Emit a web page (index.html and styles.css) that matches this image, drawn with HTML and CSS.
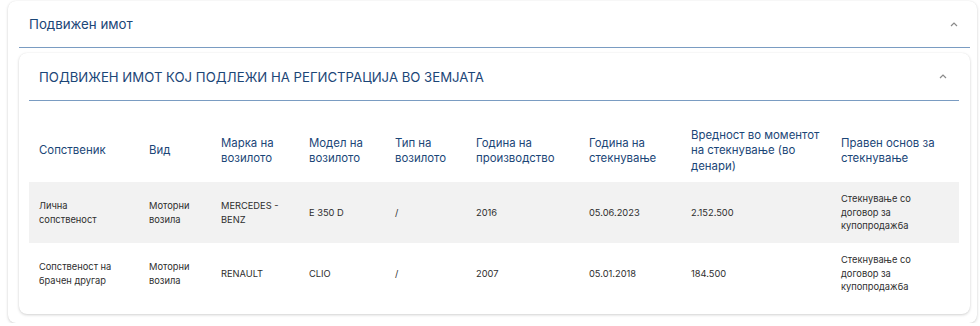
FILE: index.html
```html
<!DOCTYPE html>
<html lang="mk">
<head>
<meta charset="utf-8">
<link rel="stylesheet" href="styles.css">
</head>
<body>
<section class="card outer">
  <header class="panel-head outer-head">
    <h2 class="panel-title">Подвижен имот</h2>
    <span class="chev"><svg width="8" height="5" viewBox="0 0 8 5"><path d="M1 4 L4 1 L7 4" fill="none" stroke="#8a8a8a" stroke-width="1.2"/></svg></span>
  </header>
  <section class="card inner">
    <header class="panel-head inner-head">
      <h3 class="panel-title upper">ПОДВИЖЕН ИМОТ КОЈ ПОДЛЕЖИ НА РЕГИСТРАЦИЈА ВО ЗЕМЈАТА</h3>
      <span class="chev"><svg width="8" height="5" viewBox="0 0 8 5"><path d="M1 4 L4 1 L7 4" fill="none" stroke="#8a8a8a" stroke-width="1.2"/></svg></span>
    </header>
    <table class="grid">
      <colgroup>
        <col style="width:110px"><col style="width:72px"><col style="width:88px"><col style="width:86px"><col style="width:81px"><col style="width:113px"><col style="width:102px"><col style="width:150px"><col style="width:128px">
      </colgroup>
      <thead>
        <tr>
          <th>Сопственик</th>
          <th>Вид</th>
          <th>Марка на возилото</th>
          <th>Модел на возилото</th>
          <th>Тип на возилото</th>
          <th>Година на производство</th>
          <th>Година на стекнување</th>
          <th>Вредност во моментот на стекнување (во денари)</th>
          <th>Правен основ за стекнување</th>
        </tr>
      </thead>
      <tbody>
        <tr class="alt">
          <td>Лична сопственост</td>
          <td>Моторни возила</td>
          <td>MERCEDES - BENZ</td>
          <td>E 350 D</td>
          <td>/</td>
          <td>2016</td>
          <td>05.06.2023</td>
          <td>2.152.500</td>
          <td>Стекнување со договор за купопродажба</td>
        </tr>
        <tr>
          <td>Сопственост на брачен другар</td>
          <td>Моторни возила</td>
          <td>RENAULT</td>
          <td>CLIO</td>
          <td>/</td>
          <td>2007</td>
          <td>05.01.2018</td>
          <td>184.500</td>
          <td>Стекнување со договор за купопродажба</td>
        </tr>
      </tbody>
    </table>
  </section>
</section>
</body>
</html>
```
FILE: styles.css
```css
html, body {
  margin: 0;
  padding: 0;
  background: #ffffff;
}
body {
  font-family: Inter, "Noto Sans", sans-serif;
  padding: 1px 3px 0 8px;
}
.card {
  background: #fff;
  border-radius: 8px;
  box-shadow: 0 1px 3px rgba(0,0,0,0.18), 0 0 1px rgba(0,0,0,0.08);
}
.outer {
  padding: 0 7px 9px 11px;
}
.panel-head {
  display: flex;
  align-items: center;
  justify-content: space-between;
  border-bottom: 1.5px solid #7a9cc2;
}
.outer-head {
  height: 46px;
  padding: 0 12px 0 10px;
}
.panel-title {
  margin: 0;
  font-weight: 400;
  color: #1b4677;
  font-size: 13.3px;
}
.upper {
  font-size: 13.2px;
}
.chev {
  display: flex;
  align-items: center;
}
.inner {
  margin-top: 5px;
  padding: 0 11px 10px 10px;
}
.inner-head {
  height: 47px;
  padding: 0 12px 0 10px;
}
.grid {
  margin-top: 9px;
  width: 930px;
  border-collapse: collapse;
  table-layout: fixed;
}
.grid th {
  text-align: left;
  font-weight: 400;
  font-size: 11.4px;
  line-height: 15.5px;
  color: #1b4677;
  padding: 17px 10px 7px;
  height: 48px;
  vertical-align: middle;
}
.grid td {
  font-size: 9.3px;
  line-height: 13.5px;
  color: #2e2e2e;
  padding: 0 14px 0 10px;
  height: 61px;
  vertical-align: middle;
}
.grid tr.alt td {
  background: #f2f2f2;
}
```
